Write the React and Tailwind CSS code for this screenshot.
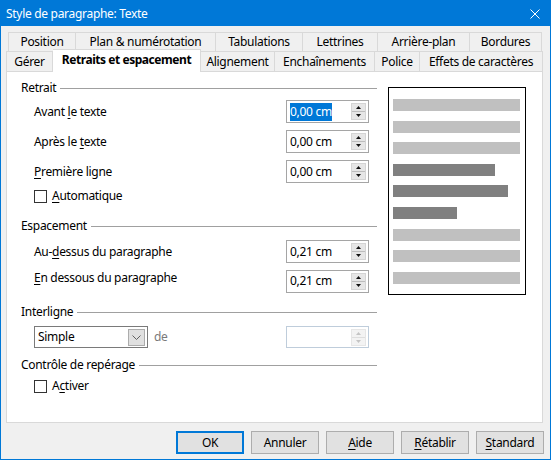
import React from 'react';

const row1 = [
  ['Position', 'w-[68px] border-l'],
  ['Plan & numérotation', 'w-[140px]'],
  ['Tabulations', 'w-[87px]'],
  ['Lettrines', 'w-[75px]'],
  ['Arrière-plan', 'w-[92px]'],
  ['Bordures', 'w-[72px]'],
];

const bars = [
  { w: 'w-[127px]', c: 'bg-[#c0c0c0]' },
  { w: 'w-[127px]', c: 'bg-[#c0c0c0]' },
  { w: 'w-[127px]', c: 'bg-[#c0c0c0]' },
  { w: 'w-[102px]', c: 'bg-[#808080]' },
  { w: 'w-[115px]', c: 'bg-[#808080]' },
  { w: 'w-[64px]', c: 'bg-[#808080]' },
  { w: 'w-[127px]', c: 'bg-[#c0c0c0]' },
  { w: 'w-[127px]', c: 'bg-[#c0c0c0]' },
  { w: 'w-[127px]', c: 'bg-[#c0c0c0]' },
];

function Arrow({ up, disabled }) {
  return (
    <svg width="5" height="3" viewBox="0 0 5 3">
      <polygon
        points={up ? '0,3 2.5,0 5,3' : '0,0 2.5,3 5,0'}
        fill={disabled ? '#c4c4c4' : '#111'}
      />
    </svg>
  );
}

function Spin({ disabled }) {
  return (
    <div
      className={
        disabled
          ? 'flex h-[17px] w-[15px] flex-col border border-[#e6e6e6] bg-[#f3f3f3]'
          : 'flex h-[17px] w-[15px] flex-col border border-[#d4d4d4] bg-[#e6e6e6]'
      }
    >
      <div className="flex flex-1 items-center justify-center">
        <Arrow up disabled={disabled} />
      </div>
      <div className={disabled ? 'h-px bg-[#dedede]' : 'h-px bg-[#bcbcbc]'} />
      <div className="flex flex-1 items-center justify-center">
        <Arrow disabled={disabled} />
      </div>
    </div>
  );
}

function Field({ value, selected, disabled }) {
  return (
    <div
      className={
        disabled
          ? 'mr-[8px] flex h-[22px] w-[83px] items-center justify-between border border-[#bfcddb] bg-white pl-[3px] pr-[2px]'
          : 'mr-[8px] flex h-[23px] w-[83px] items-center justify-between border border-[#a5a5a5] bg-white pl-[3px] pr-[2px]'
      }
    >
      {selected ? (
        <span className="bg-[#0078d7] leading-[18px] text-white">{value}</span>
      ) : (
        <span>{value}</span>
      )}
      <Spin disabled={disabled} />
    </div>
  );
}

function Heading({ children, className }) {
  return (
    <div className={`flex h-[16px] items-center gap-[4px] ${className}`}>
      <span>{children}</span>
      <div className="h-px flex-1 bg-[#a0a0a0]" />
    </div>
  );
}

function Check({ children, className }) {
  return (
    <div className={`flex h-[16px] items-center pl-[13px] ${className}`}>
      <div className="h-[13px] w-[13px] border border-[#333] bg-white" />
      <span className="ml-[5px]">{children}</span>
    </div>
  );
}

function Button({ children, primary }) {
  return (
    <div
      className={
        primary
          ? 'flex h-[23px] w-[68px] items-center justify-center border-2 border-[#0078d7] bg-[#e1e1e1]'
          : 'flex h-[23px] w-[68px] items-center justify-center border border-[#adadad] bg-[#e1e1e1]'
      }
    >
      {children}
    </div>
  );
}

export default function App() {
  return (
    <div className="flex h-[460px] w-[551px] flex-col bg-[#0078d7] p-px font-['Noto_Sans',sans-serif] text-[12px] tracking-[-0.3px] text-black">
      {/* Title bar */}
      <div className="flex h-[25px] items-center justify-between pl-[5px] pr-[10px] text-white">
        <span>Style de paragraphe: Texte</span>
        <svg width="10" height="10" viewBox="0 0 10 10">
          <path d="M0.5 0.5 L9.5 9.5 M9.5 0.5 L0.5 9.5" stroke="#fff" strokeWidth="1" />
        </svg>
      </div>

      {/* Body */}
      <div className="flex flex-1 flex-col bg-[#f0f0f0] pl-[5px] pr-[6px] pt-[6px]">
        {/* Tabs row 1 */}
        <div className="ml-[2px] flex h-[19px]">
          {row1.map(([label, cls]) => (
            <div
              key={label}
              className={`${cls} flex items-center justify-center border-r border-t border-[#d9d9d9] bg-[#f0f0f0]`}
            >
              {label}
            </div>
          ))}
        </div>
        {/* Tabs row 2 */}
        <div className="flex h-[20px]">
          <div className="flex w-[47px] items-center justify-center border-l border-r border-t border-[#d9d9d9]">
            Gérer
          </div>
          <div className="relative z-10 -mt-[2px] flex h-[23px] w-[148px] items-center justify-center border-r border-t border-[#d9d9d9] bg-white pb-[2px] font-bold tracking-[-0.45px]">
            Retraits et espacement
          </div>
          <div className="flex w-[74px] items-center justify-center border-r border-t border-[#d9d9d9]">
            Alignement
          </div>
          <div className="flex w-[100px] items-center justify-center border-r border-t border-[#d9d9d9]">
            Enchaînements
          </div>
          <div className="flex w-[45px] items-center justify-center border-r border-t border-[#d9d9d9]">
            Police
          </div>
          <div className="flex w-[123px] items-center justify-center border-r border-t border-[#d9d9d9]">
            Effets de caractères
          </div>
        </div>

        {/* Panel */}
        <div className="mr-[1px] flex h-[352px] border border-[#d9d9d9] bg-white pl-[14px]">
          <div className="flex w-[356px] flex-col">
            <Heading className="mt-[8px]">Retrait</Heading>
            <div className="mt-[4px] flex items-center justify-between">
              <span className="pl-[13px]">
                Avant <u className="underline-offset-2">l</u>e texte
              </span>
              <Field value="0,00 cm" selected />
            </div>
            <div className="mt-[7px] flex items-center justify-between">
              <span className="pl-[13px]">
                Après le <u className="underline-offset-2">t</u>exte
              </span>
              <Field value="0,00 cm" />
            </div>
            <div className="mt-[7px] flex items-center justify-between">
              <span className="pl-[13px]">
                <u className="underline-offset-2">P</u>remière ligne
              </span>
              <Field value="0,00 cm" />
            </div>
            <Check className="mt-[5px]">
              <u className="underline-offset-2">A</u>utomatique
            </Check>

            <Heading className="mt-[14px]">Espacement</Heading>
            <div className="mt-[6px] flex items-center justify-between">
              <span className="pl-[13px]">
                Au-<u className="underline-offset-2">d</u>essus du paragraphe
              </span>
              <Field value="0,21 cm" />
            </div>
            <div className="mt-[6px] flex items-center justify-between">
              <span className="mb-[6px] pl-[13px]">
                <u className="underline-offset-2">E</u>n dessous du paragraphe
              </span>
              <Field value="0,21 cm" />
            </div>

            <Heading className="mt-[11px]">Interligne</Heading>
            <div className="mt-[6px] flex h-[22px] items-center">
              <div className="ml-[13px] flex h-[22px] w-[114px] items-center justify-between border border-[#7a7a7a] bg-white pl-[3px] pr-[2px]">
                <span>Simple</span>
                <div className="flex h-[17px] w-[17px] items-center justify-center border border-[#acacac] bg-[#e0e0e0]">
                  <svg width="9" height="5" viewBox="0 0 9 5">
                    <path d="M0.5 0.5 L4.5 4.5 L8.5 0.5" fill="none" stroke="#606060" strokeWidth="1" />
                  </svg>
                </div>
              </div>
              <span className="ml-[6px] text-[#7a7a7a]">de</span>
              <div className="ml-auto">
                <Field value="" disabled />
              </div>
            </div>

            <Heading className="mt-[9px]">Contrôle de repérage</Heading>
            <Check className="mt-[5px]">
              A<u className="underline-offset-2">c</u>tiver
            </Check>
          </div>

          {/* Preview */}
          <div className="ml-[11px] mt-[15px] flex h-[208px] w-[138px] flex-col gap-[9.6px] border border-black bg-white pl-[4px] pt-[11px]">
            {bars.map((b, i) => (
              <div key={i} className={`h-[12px] shrink-0 ${b.w} ${b.c}`} />
            ))}
          </div>
        </div>

        {/* Buttons */}
        <div className="mt-[8px] flex justify-end gap-[7px]">
          <Button primary>OK</Button>
          <Button>Annuler</Button>
          <Button>
            <u className="underline-offset-2">A</u>ide
          </Button>
          <Button>
            <u className="underline-offset-2">R</u>établir
          </Button>
          <Button>
            <u className="underline-offset-2">S</u>tandard
          </Button>
        </div>
      </div>
    </div>
  );
}
